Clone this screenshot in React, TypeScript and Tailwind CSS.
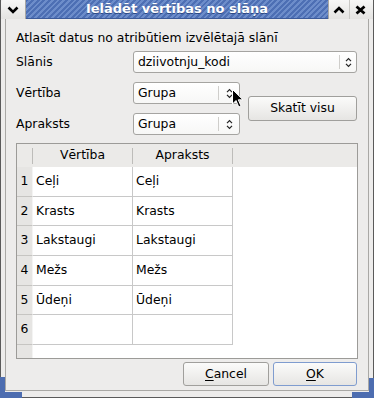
import React from "react";

const Arrows = () => (
  <svg width="7" height="11" viewBox="0 0 7 11" fill="none" stroke="#222" strokeWidth="1.2">
    <path d="M1 4.2 L3.5 1.6 L6 4.2" />
    <path d="M1 6.8 L3.5 9.4 L6 6.8" />
  </svg>
);

function Combo({ text, arrowW }: { text: string; arrowW: string }) {
  return (
    <div className="flex items-center h-[22px] rounded-[3px] border border-[#a5a4a1] bg-linear-to-b from-white to-[#f7f7f6]">
      <span className="flex-1 pl-[4px] leading-[16px]">{text}</span>
      <span className="w-px h-[14px] bg-[#cfcecb]" />
      <span className={`${arrowW} flex justify-center`}>
        <Arrows />
      </span>
    </div>
  );
}

const rows = [
  ["1", "Ceļi", "Ceļi"],
  ["2", "Krasts", "Krasts"],
  ["3", "Lakstaugi", "Lakstaugi"],
  ["4", "Mežs", "Mežs"],
  ["5", "Ūdeņi", "Ūdeņi"],
  ["6", "", ""],
];

export default function App() {
  return (
    <div className="relative w-[374px] h-[399px] bg-white overflow-hidden font-['DejaVu_Sans',sans-serif] text-[12.4px] text-black">
      <div className="flex flex-col w-[374px] h-[398px] border-x border-b border-[#5a5a5a] bg-[#edeceb]">
        {/* title bar */}
        <div className="flex h-[19px] shrink-0">
          <div className="w-[25px] flex items-center justify-center bg-linear-to-b from-[#f7f7f6] to-[#e4e3e1] rounded-tl-[3px] border-r border-[#a8a7a4]">
            <svg width="12" height="8" viewBox="0 0 12 8">
              <path d="M1.5 1.5 L6 6 L10.5 1.5" fill="none" stroke="#000" strokeWidth="2.6" />
            </svg>
          </div>
          <div className="flex-1 flex items-center justify-center bg-[repeating-linear-gradient(135deg,#4d6fb4_0px,#4d6fb4_2px,#6d8dca_2px,#6d8dca_4px)] border-b border-[#3c5a99]">
            <span className="font-bold text-[13px] text-white leading-[16px] [text-shadow:0_1px_0_#2d4a85]">
              Ielādēt vērtības no slāņa
            </span>
          </div>
          <div className="w-[21px] flex items-center justify-center bg-linear-to-b from-[#f7f7f6] to-[#e4e3e1] border-l border-[#a8a7a4]">
            <svg width="12" height="8" viewBox="0 0 12 8">
              <path d="M1.5 6.5 L6 2 L10.5 6.5" fill="none" stroke="#000" strokeWidth="2.6" />
            </svg>
          </div>
          <div className="w-[24px] flex items-center justify-center bg-linear-to-b from-[#f7f7f6] to-[#e4e3e1] border-l border-[#c9c8c5] pr-[3px]">
            <svg width="11" height="10" viewBox="0 0 11 10">
              <path d="M1.5 1.5 L9.5 8.5 M9.5 1.5 L1.5 8.5" fill="none" stroke="#000" strokeWidth="2.8" />
            </svg>
          </div>
        </div>

        {/* frame */}
        <div className="flex-1 flex flex-col px-[4px] pb-[6px]">
          <div className="flex-1 flex flex-col border-x border-b border-[#a9a8a5] pl-[10px] pr-[10px] pt-[11px]">
            <div className="leading-[16px]">Atlasīt datus no atribūtiem izvēlētajā slānī</div>

            <div className="mt-[5px] grid grid-cols-[109px_107px_1fr] grid-rows-[22px_22px_22px] gap-x-[8px] gap-y-[9px] items-center">
              <span>Slānis</span>
              <div className="col-span-2 mr-px">
                <Combo text="dziivotnju_kodi" arrowW="w-[16px]" />
              </div>
              <span>Vērtība</span>
              <Combo text="Grupa" arrowW="w-[20px]" />
              <div className="row-span-2 self-center mr-px">
                <div className="h-[25px] flex items-center justify-center rounded-[3px] border border-[#a09f9c] bg-linear-to-b from-[#fbfbfa] to-[#e6e5e3]">
                  Skatīt visu
                </div>
              </div>
              <span>Apraksts</span>
              <Combo text="Grupa" arrowW="w-[20px]" />
            </div>

            {/* table */}
            <div className="mt-[8px] h-[216px] flex flex-col border border-[#9c9b98] bg-white">
              <div className="h-[23px] flex bg-[#ebeae8] shrink-0">
                <div className="w-[16px] flex items-center justify-end">
                  <span className="w-px h-[16px] bg-[#bdbcb9]" />
                </div>
                <div className="w-[100px] flex items-center">
                  <span className="flex-1 text-center">Vērtība</span>
                  <span className="w-px h-[16px] bg-[#bdbcb9]" />
                </div>
                <div className="w-[100px] flex items-center">
                  <span className="flex-1 text-center">Apraksts</span>
                  <span className="w-px h-[16px] bg-[#bdbcb9]" />
                </div>
                <div className="flex-1" />
              </div>
              {rows.map((r) => (
                <div key={r[0]} className="h-[29.67px] flex shrink-0">
                  <div className="w-[16px] flex items-center justify-center bg-[#e6e5e3] border-b border-[#c6c5c2] border-r border-r-[#f4f4f3]">
                    {r[0]}
                  </div>
                  <div className="w-[100px] flex items-center pl-[3px] border-b border-r border-[#c8c8c8]">{r[1]}</div>
                  <div className="w-[100px] flex items-center pl-[3px] border-b border-r border-[#c8c8c8]">{r[2]}</div>
                  <div className="flex-1" />
                </div>
              ))}
              <div className="flex-1 flex">
                <div className="w-[16px] bg-[#e6e5e3] border-r border-[#f4f4f3]" />
                <div className="flex-1" />
              </div>
            </div>

            <div className="mt-[3px] flex justify-end gap-[4px] mr-px">
              <div className="w-[86px] h-[24px] flex items-center justify-center rounded-[3px] border border-[#a09f9c] bg-linear-to-b from-[#fbfbfa] to-[#e6e5e3]">
                <span><span className="underline underline-offset-2">C</span>ancel</span>
              </div>
              <div className="w-[84px] h-[24px] flex items-center justify-center rounded-[3px] border border-[#7f9ccf] bg-linear-to-b from-[#fbfbfa] to-[#e6e5e3]">
                <span><span className="underline underline-offset-2">O</span>K</span>
              </div>
            </div>
          </div>
        </div>
      </div>

      {/* resize corner highlights */}
      <div className="absolute left-0 top-[377px] w-[5px] h-[21px] bg-[#4d6db0]" />
      <div className="absolute left-0 top-[392px] w-[22px] h-[6px] bg-[#4d6db0]" />
      <div className="absolute right-0 top-[378px] w-[5px] h-[20px] bg-[#4d6db0]" />
      <div className="absolute right-0 top-[392px] w-[22px] h-[6px] bg-[#4d6db0]" />

      {/* mouse cursor */}
      <svg className="absolute left-[232px] top-[89px]" width="13" height="20" viewBox="0 0 13 20">
        <path d="M0.5 0.5 L0.5 15 L4 11.5 L6.8 18 L9 17 L6.3 10.8 L11 10.8 Z" fill="#000" stroke="#fff" strokeWidth="1" />
      </svg>
    </div>
  );
}
